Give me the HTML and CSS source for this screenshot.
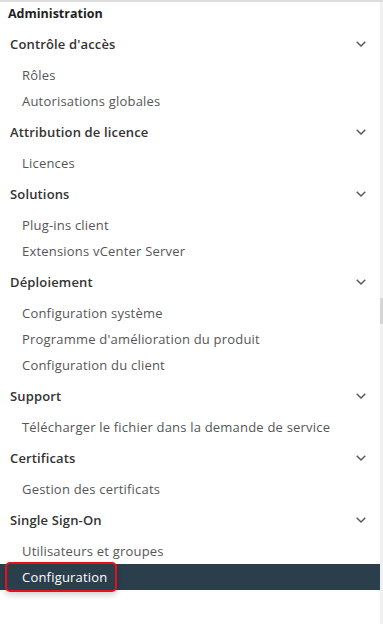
FILE: index.html
```html
<!DOCTYPE html>
<html lang="fr">
<head>
<meta charset="utf-8">
<link rel="stylesheet" href="styles.css">
</head>
<body>
<div class="panel">
  <nav class="nav">
    <div class="title">Administration</div>
    <div class="group">
      <div class="head"><span>Contrôle d'accès</span><svg class="chev" viewBox="0 0 10 6"><path d="M0.7 0.7 L5 5 L9.3 0.7"/></svg></div>
      <div class="item">Rôles</div>
      <div class="item">Autorisations globales</div>
    </div>
    <div class="group">
      <div class="head"><span>Attribution de licence</span><svg class="chev" viewBox="0 0 10 6"><path d="M0.7 0.7 L5 5 L9.3 0.7"/></svg></div>
      <div class="item">Licences</div>
    </div>
    <div class="group">
      <div class="head"><span>Solutions</span><svg class="chev" viewBox="0 0 10 6"><path d="M0.7 0.7 L5 5 L9.3 0.7"/></svg></div>
      <div class="item">Plug-ins client</div>
      <div class="item">Extensions vCenter Server</div>
    </div>
    <div class="group">
      <div class="head"><span>Déploiement</span><svg class="chev" viewBox="0 0 10 6"><path d="M0.7 0.7 L5 5 L9.3 0.7"/></svg></div>
      <div class="item">Configuration système</div>
      <div class="item">Programme d'amélioration du produit</div>
      <div class="item">Configuration du client</div>
    </div>
    <div class="group">
      <div class="head"><span>Support</span><svg class="chev" viewBox="0 0 10 6"><path d="M0.7 0.7 L5 5 L9.3 0.7"/></svg></div>
      <div class="item">Télécharger le fichier dans la demande de service</div>
    </div>
    <div class="group">
      <div class="head"><span>Certificats</span><svg class="chev" viewBox="0 0 10 6"><path d="M0.7 0.7 L5 5 L9.3 0.7"/></svg></div>
      <div class="item">Gestion des certificats</div>
    </div>
    <div class="group">
      <div class="head"><span>Single Sign-On</span><svg class="chev" viewBox="0 0 10 6"><path d="M0.7 0.7 L5 5 L9.3 0.7"/></svg></div>
      <div class="item">Utilisateurs et groupes</div>
      <div class="item active"><span class="hl">Configuration</span></div>
    </div>
  </nav>
  <div class="scrollbar"><div class="thumb"></div></div>
</div>
</body>
</html>
```
FILE: styles.css
```css
html, body {
  margin: 0;
  padding: 0;
  background: #ffffff;
}
body {
  font-family: "Open Sans", "Liberation Sans", sans-serif;
  color: #565656;
  width: 383px;
  height: 624px;
  overflow: hidden;
}
.panel {
  display: flex;
  height: 624px;
  border-top: 2px solid #dcdcdc;
  box-sizing: border-box;
}
.nav {
  flex: 1;
  display: flex;
  flex-direction: column;
}
.title {
  height: 24px;
  line-height: 24px;
  padding-left: 8px;
  font-size: 12.5px;
  font-weight: 700;
  color: #1f1f1f;
}
.group {
  display: flex;
  flex-direction: column;
}
.head {
  height: 36px;
  display: flex;
  align-items: center;
  justify-content: space-between;
  padding-left: 10px;
  padding-right: 14px;
  font-size: 13px;
  font-weight: 600;
  letter-spacing: 0.15px;
  color: #333333;
}
.chev {
  width: 10px;
  height: 6px;
  fill: none;
  stroke: #555555;
  stroke-width: 1.4;
}
.item {
  height: 26px;
  display: flex;
  align-items: center;
  padding-left: 22px;
  font-size: 13px;
  letter-spacing: 0.2px;
  color: #565656;
}
.item.active {
  background: #2b3e4c;
  color: #ffffff;
  padding-left: 5px;
}
.hl {
  height: 30px;
  box-sizing: border-box;
  width: 112px;
  display: flex;
  align-items: center;
  padding-left: 15px;
  border: 2px solid #e8101a;
  border-radius: 5px;
  box-shadow: 0 3px 6px rgba(0,0,0,0.18);
}
.scrollbar {
  width: 3px;
  background: #f0f0f0;
  display: flex;
  flex-direction: column;
  padding-top: 296px;
}
.thumb {
  height: 26px;
  background: #d6d6d6;
}
```
